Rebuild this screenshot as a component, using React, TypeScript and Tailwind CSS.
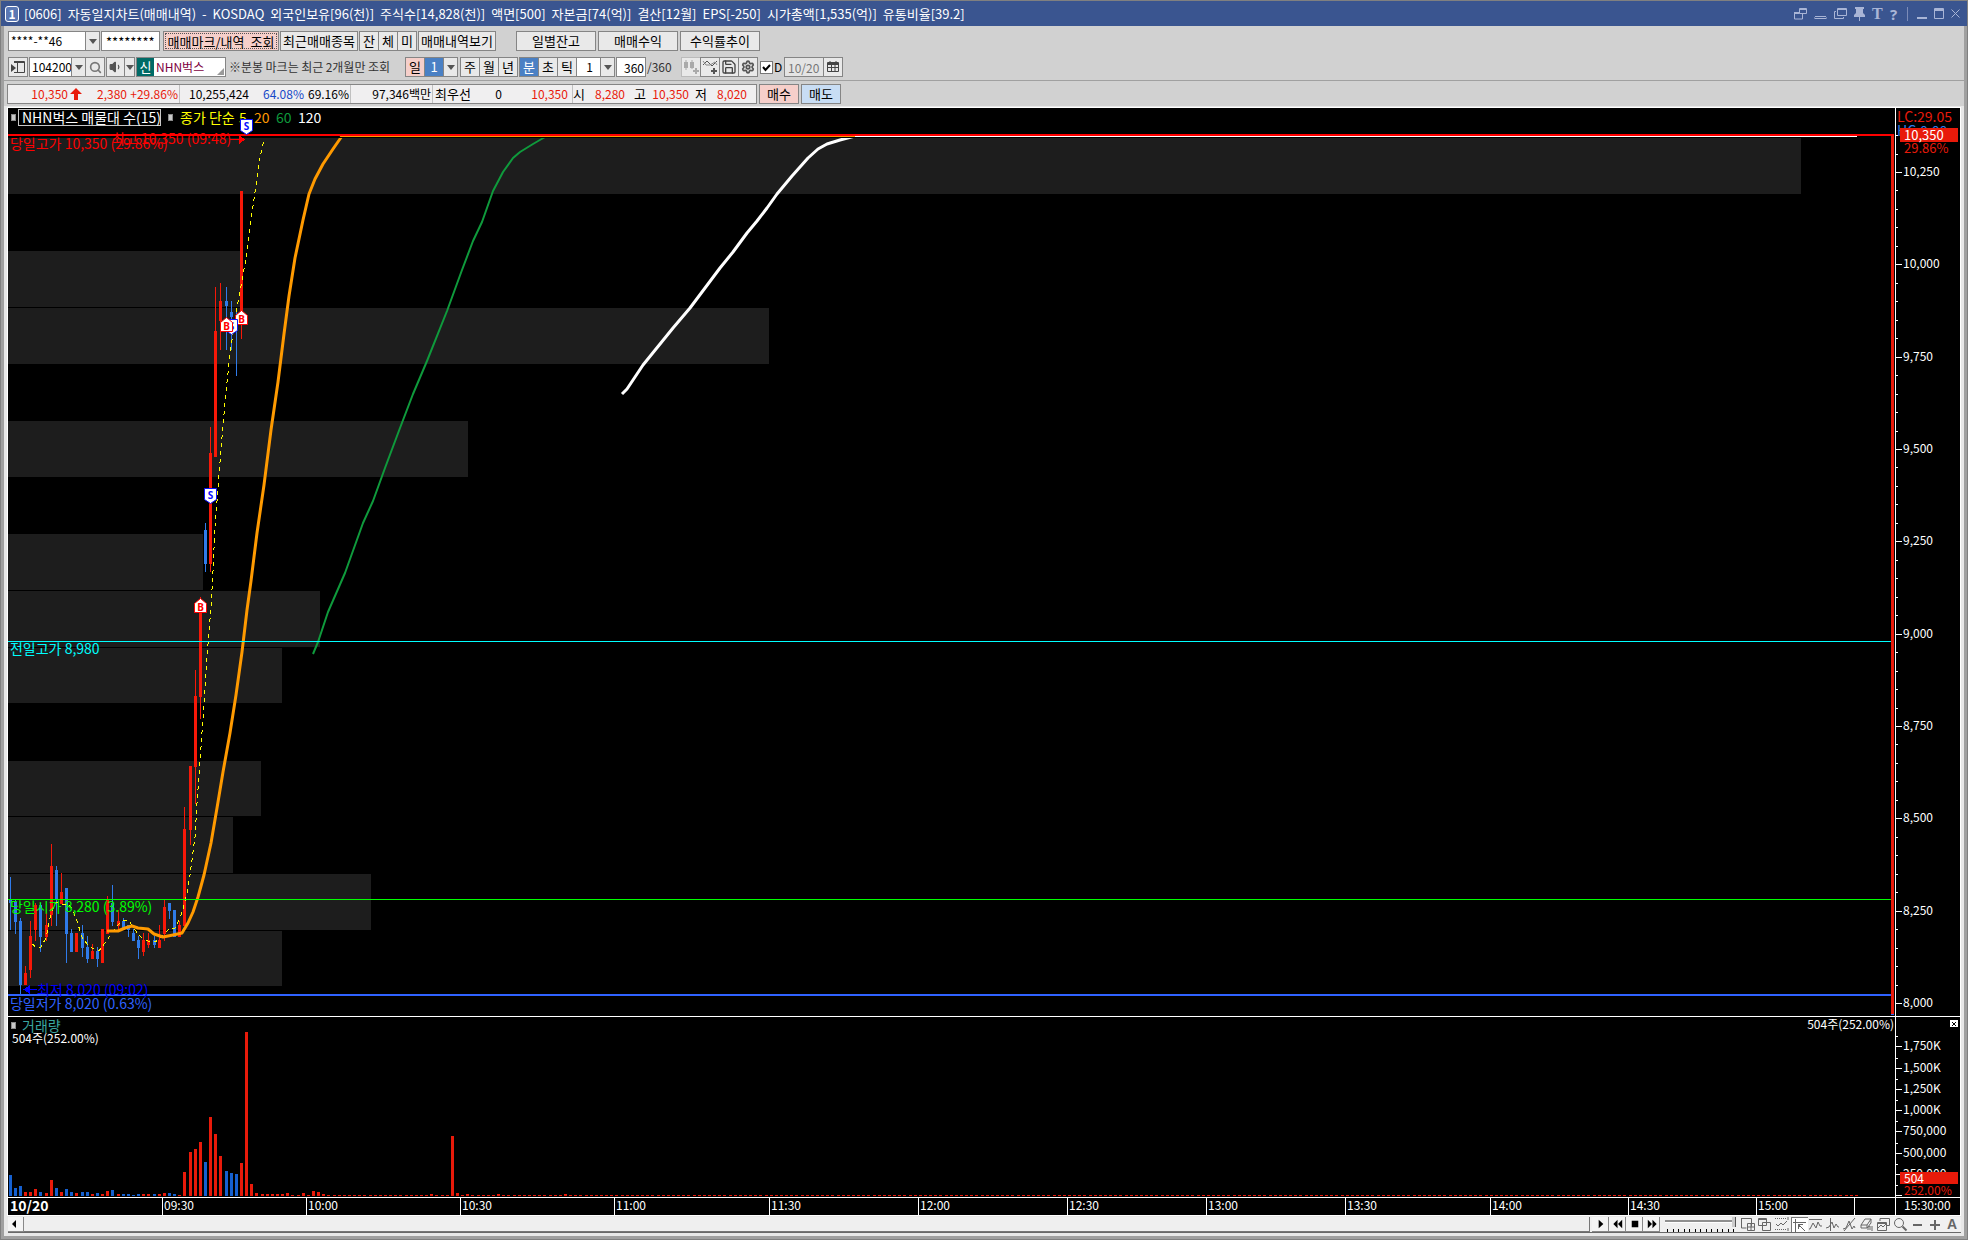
import React from "react";
import { Search, Volume1, Save, Settings, Calendar } from "lucide-react";

type Candle = [x: number, high: number, low: number, top: number, bottom: number, up: 0 | 1];

const RED = "#f71808";
const BLUE = "#2f7bea";

/* Price pane drawing space: 1887 x 908, origin at the pane's top left. */
const PW = 1887;
const PH = 908;
const VH = 180;

const candles: Candle[] = [
  [2, 769, 822, 791, 795, 0],
  [7, 791, 826, 794, 814, 0],
  [12, 810, 886, 813, 877, 0],
  [17, 858, 877, 865, 877, 1],
  [22, 813, 870, 828, 862, 1],
  [27, 795, 833, 797, 822, 1],
  [32, 795, 844, 797, 829, 0],
  [38, 801, 833, 817, 829, 1],
  [43, 736, 818, 758, 807, 1],
  [48, 758, 818, 762, 791, 0],
  [53, 765, 796, 784, 796, 1],
  [58, 780, 855, 780, 826, 0],
  [63, 821, 844, 825, 844, 0],
  [68, 825, 844, 825, 844, 1],
  [74, 817, 849, 825, 840, 0],
  [79, 828, 855, 839, 851, 0],
  [84, 836, 851, 843, 851, 1],
  [89, 839, 859, 843, 851, 0],
  [94, 821, 855, 821, 855, 1],
  [99, 788, 826, 792, 826, 1],
  [104, 777, 818, 795, 814, 0],
  [110, 802, 822, 813, 818, 1],
  [115, 810, 822, 813, 822, 0],
  [120, 817, 829, 817, 822, 0],
  [125, 821, 833, 825, 833, 0],
  [130, 828, 851, 832, 840, 0],
  [135, 825, 848, 832, 844, 1],
  [140, 825, 840, 832, 837, 1],
  [146, 828, 840, 832, 837, 0],
  [151, 817, 840, 832, 840, 1],
  [156, 791, 833, 799, 826, 1],
  [161, 795, 811, 795, 803, 0],
  [166, 802, 829, 802, 829, 0],
  [171, 813, 829, 817, 829, 1],
  [176, 699, 818, 721, 818, 1],
  [182, 658, 737, 658, 722, 1],
  [187, 562, 696, 588, 659, 1],
  [192, 489, 611, 499, 589, 1],
  [197, 415, 464, 422, 456, 0],
  [202, 319, 464, 345, 456, 1],
  [207, 179, 349, 223, 349, 1],
  [212, 175, 242, 193, 213, 1],
  [218, 179, 242, 193, 198, 0],
  [223, 193, 242, 204, 209, 0],
  [228, 201, 268, 212, 216, 0],
  [233, 83, 231, 83, 205, 1],
];

const bands: [y: number, h: number, w: number][] = [
  [30, 56, 1793],
  [143, 56, 232],
  [200, 56, 761],
  [313, 56, 460],
  [426, 56, 195],
  [483, 56, 312],
  [540, 55, 274],
  [653, 55, 253],
  [709, 56, 225],
  [766, 56, 363],
  [823, 55, 274],
];

const ma5 =
  "24,836 28,839 33,839 38,830 43,805 48,794 53,796 59,796 64,800 69,813 74,829 79,836 84,840 91,843 97,835 104,825 110,817 116,812 121,813 125,819 130,826 135,831 140,833 146,834 151,832 157,825 162,820 167,820 172,810 175,801 179,785 182,767 187,729 189,695 192,654 196,595 199,549 203,499 205,463 207,418 210,380 214,329 218,284 222,246 225,225 230,194 235,167 239,145 243,112 247,84 251,55 255,36 258,30";
const ma20 =
  "99,823 110,823 117,820 124,818 130,820 140,821 146,826 155,829 165,827 174,825 180,815 185,804 190,789 196,767 203,735 209,700 215,664 222,625 228,587 234,544 239,502 243,473 249,425 256,377 263,322 270,274 276,226 281,188 287,150 295,112 301,86 307,71 315,56 325,41 334,28 840,28";
const ma60 =
  "305,546 310,534 320,504 337,465 355,415 365,393 377,360 392,320 405,286 419,253 439,203 454,162 465,133 474,114 485,83 495,64 505,50 512,44 525,36 537,29 543,28";
const ma120 =
  "614,286 619,281 635,257 665,220 682,200 712,160 725,144 739,125 749,113 759,100 769,86 784,68 800,50 810,41 819,36 832,32 847,28 1849,28";

/* Volume bar heights for the first bars, negative for a falling bar. */
const volumes = [
  -21, -8, -10, 4, 4, 7, -4, 3, 16, -8, 4, -7, -4, 3, -4, -4, 2, -3, 2, 5, -6, 2, -2, -2, -1, -2, 2, 2, -2, 2, 3, -3,
  -2, 1, 24, 44, 47, 54, -34, 79, 62, 40, -25, -23, -22, 33, 164, 12, 3, 2, 2, 2, 2, 2, 3, 1, 1, 3, 1, 5, 4, 2,
];
const laterVolumes: Record<number, number> = { 82: 2, 86: 60, 87: 3, 89: 2, 95: 2, 108: 2 };
const bars = Array.from({ length: 360 }, (_, i) => ({
  x: 1 + Math.floor(0.1 + (i * 36) / 7),
  v: volumes[i] ?? laterVolumes[i] ?? 1,
}));

const priceY = (p: number) => 895 - ((p - 8000) * 831) / 2250;
const priceLabels = [10250, 10000, 9750, 9500, 9250, 9000, 8750, 8500, 8250, 8000];
const priceTicks = Array.from({ length: 48 }, (_, i) => 8000 + i * 50);

const volumeLabels: [string, number][] = [
  ["1,750K", 29],
  ["1,500K", 51],
  ["1,250K", 72],
  ["1,000K", 93],
  ["750,000", 114],
  ["500,000", 136],
  ["250,000", 157],
];
const volumeMinor = [19, 41, 62, 83, 104, 126, 147, 168];

const times: [string, number][] = [
  ["09:30", 154],
  ["10:00", 298],
  ["10:30", 452],
  ["11:00", 606],
  ["11:30", 761],
  ["12:00", 910],
  ["12:30", 1059],
  ["13:00", 1198],
  ["13:30", 1337],
  ["14:00", 1482],
  ["14:30", 1620],
  ["15:00", 1748],
  ["", 1846],
];

const pct = (v: number, total: number) => `${(v / total) * 100}%`;

const btn =
  "flex h-5 shrink-0 items-center justify-center border border-[#858585] bg-[#e9e9e9] text-black whitespace-nowrap";

function Btn({ className, children, label }: { className: string; children: React.ReactNode; label?: string }) {
  return (
    <button type="button" aria-label={label} className={`${btn} ${className}`}>
      {children}
    </button>
  );
}

function Caret() {
  return (
    <svg width="8" height="5" viewBox="0 0 8 5" className="shrink-0">
      <path d="M0 0h8L4 5z" fill="#555" />
    </svg>
  );
}

function Combo({ label, value, className, align }: { label: string; value: string; className: string; align: string }) {
  return (
    <label className={`relative flex h-5 shrink-0 border border-[#858585] bg-white ${className}`}>
      <select
        aria-label={label}
        className={`w-full appearance-none bg-transparent pr-[14px] pl-[2px] text-[12px] outline-none ${align}`}
      >
        <option>{value}</option>
      </select>
      <span className="pointer-events-none absolute inset-y-0 right-0 flex w-[14px] items-center justify-center border-l border-[#858585] bg-[#e9e9e9]">
        <Caret />
      </span>
    </label>
  );
}

function Marker({ kind, x, y }: { kind: "S" | "B"; x: number; y: number }) {
  const sell = kind === "S";
  return (
    <svg
      width="13"
      height="16"
      viewBox="0 0 13 16"
      className="absolute z-10"
      style={{ left: pct(x, PW), top: pct(y, PH) }}
    >
      <path
        d={sell ? "M.5.5h12v11L6.5 15.5L.5 11.5z" : "M.5 14.5h12V5.5L6.5.5L.5 5.5z"}
        fill="#fff"
        stroke={sell ? "#0a10ff" : "#f00"}
      />
      <text
        x="6.5"
        y={sell ? 11 : 13}
        textAnchor="middle"
        fontSize="10"
        fontWeight="700"
        fontFamily="Noto Sans, sans-serif"
        fill={sell ? "#0a10ff" : "#f00"}
      >
        {kind}
      </text>
    </svg>
  );
}

function PlotText({ x, y, className, children }: { x: number; y: number; className: string; children: React.ReactNode }) {
  return (
    <span
      className={`absolute text-[14px] leading-4 whitespace-pre ${className}`}
      style={{ left: pct(x, PW), top: pct(y, PH) }}
    >
      {children}
    </span>
  );
}

function TitleBar() {
  return (
    <header className="flex h-[25px] shrink-0 items-center bg-[#3a5590] pr-[7px] pl-1 text-white">
      <span className="flex h-4 w-[14px] items-center justify-center rounded-[3px] border border-white bg-[#5b78b4] text-[12px] leading-none font-bold">
        1
      </span>
      <h1 className="flex gap-[6px] pl-[5px] text-[13px] whitespace-nowrap">
        <span>[0606]</span>
        <span>자동일지차트(매매내역)</span>
        <span>-</span>
        <span>KOSDAQ</span>
        <span>외국인보유[96(천)]</span>
        <span>주식수[14,828(천)]</span>
        <span>액면[500]</span>
        <span>자본금[74(억)]</span>
        <span>결산[12월]</span>
        <span>EPS[-250]</span>
        <span>시가총액[1,535(억)]</span>
        <span>유통비율[39.2]</span>
      </h1>
      <div className="ml-auto flex items-center gap-[7px] text-[#a9b5d6]">
        <button type="button" aria-label="창 분리">
          <svg width="13" height="13" viewBox="0 0 13 13" fill="none" stroke="currentColor">
            <path d="M5.500 1.500h7v5h-7zM5 2.500h8M.5 5.500h5M.5 5v7h8V6.500M.5 6.500h5" />
          </svg>
        </button>
        <button type="button" aria-label="접기">
          <svg width="13" height="13" viewBox="0 0 13 13" fill="none" stroke="currentColor">
            <path d="M1 9.500h11M0 10v2M13 10v2M1 11.500h11" />
          </svg>
        </button>
        <button type="button" aria-label="창 복사">
          <svg width="13" height="13" viewBox="0 0 13 13" fill="none" stroke="currentColor">
            <path d="M3.500 1.500h9v7h-9zM3 2.500h10M2 4.500H.5v7h9V10" />
          </svg>
        </button>
        <button type="button" aria-label="고정">
          <svg width="11" height="14" viewBox="0 0 11 14" fill="currentColor">
            <path d="M1 0h9v2H9v4l2 2v2H6v4H5v-4H0V8l2-2V2H1z" />
          </svg>
        </button>
        <button type="button" className="w-[10px] font-['Liberation_Serif',serif] text-[16px] leading-4 font-bold">
          T
        </button>
        <button type="button" className="w-[9px] font-['Noto_Sans',sans-serif] text-[15px] leading-4 font-bold">
          ?
        </button>
        <span className="mx-[2px] h-[14px] w-px bg-[#7c8cb8]" />
        <button type="button" aria-label="최소화">
          <svg width="10" height="12" viewBox="0 0 10 12" fill="currentColor">
            <path d="M0 9h10v2H0z" />
          </svg>
        </button>
        <button type="button" aria-label="최대화">
          <svg width="10" height="11" viewBox="0 0 10 11" fill="none" stroke="currentColor">
            <path d="M.5.5h9v10h-9zM0 1.500h10M0 2.500h10" />
          </svg>
        </button>
        <button type="button" aria-label="닫기">
          <svg width="9" height="9" viewBox="0 0 9 9" fill="none" stroke="currentColor">
            <path d="M.5.5l8 8M8.500.5l-8 8" />
          </svg>
        </button>
      </div>
    </header>
  );
}

function AccountRow() {
  return (
    <div className="flex h-5 gap-px">
      <Combo label="계좌" value="****-**46" className="w-[92px]" align="" />
      <input
        aria-label="비밀번호"
        defaultValue="********"
        className="h-5 w-[59px] border border-[#858585] bg-white px-1 outline-none"
      />
      <span className="w-px" />
      <button type="button" className="h-5 w-[116px] border border-[#858585] bg-[#f6cfca] p-px">
        <span className="flex h-full items-center justify-center gap-[6px] border border-dotted border-[#555] leading-none whitespace-nowrap">
          <span>매매마크/내역</span>
          <span>조회</span>
        </span>
      </button>
      <Btn className="w-[78px]">최근매매종목</Btn>
      <div className="flex">
        <Btn className="w-5">잔</Btn>
        <Btn className="-ml-px w-5">체</Btn>
        <Btn className="-ml-px w-5">미</Btn>
      </div>
      <Btn className="w-[78px]">매매내역보기</Btn>
      <div className="flex gap-[2px] pl-[19px]">
        <Btn className="w-20">일별잔고</Btn>
        <Btn className="w-20">매매수익</Btn>
        <Btn className="w-20">수익률추이</Btn>
      </div>
    </div>
  );
}

function StockRow() {
  return (
    <div className="flex h-5 gap-px">
      <Btn className="w-5" label="목록">
        <svg width="14" height="14" viewBox="0 0 14 14" fill="none" stroke="#444">
          <path d="M3 1.500h10.500v11H3M6.500 1.500v11M3 2.500h10" />
          <path d="M0 4l5 4l-5 4z" fill="#444" stroke="none" />
        </svg>
      </Btn>
      <div className="flex">
        <Combo label="종목코드" value="104200" className="w-[57px]" align="" />
        <Btn className="-ml-px w-5" label="종목검색">
          <Search size={13} color="#777" strokeWidth={3} />
        </Btn>
      </div>
      <div className="flex">
        <Btn className="w-[19px]" label="음성">
          <Volume1 size={14} color="#555" fill="#555" />
        </Btn>
        <Btn className="-ml-px w-[11px]" label="음성 설정">
          <Caret />
        </Btn>
      </div>
      <div className="relative flex h-5 w-[90px] items-center bg-white outline outline-1 -outline-offset-1 outline-[#858585]">
        <span className="ml-px flex h-[18px] w-[17px] items-center justify-center bg-[#006a66] text-white">신</span>
        <span className="pl-[2px] text-[12px] text-[#7d0040]">NHN벅스</span>
        <svg width="7" height="7" viewBox="0 0 7 7" className="absolute right-[2px] bottom-[2px]">
          <path d="M7 0v7H0z" fill="#999" />
        </svg>
      </div>
      <p className="flex w-[177px] justify-between pr-[14px] pl-[2px] text-[12px] leading-5 whitespace-nowrap text-[#333]">
        <span>※분봉</span>
        <span>마크는</span>
        <span>최근</span>
        <span>2개월만</span>
        <span>조회</span>
      </p>
      <div className="flex">
        <Btn className="w-5 bg-[#f6cfca]!">일</Btn>
        <Btn className="-ml-px w-5 bg-[#4a80c4]! text-white!">1</Btn>
        <Btn className="-ml-px w-[15px]" label="일 주기">
          <Caret />
        </Btn>
      </div>
      <div className="flex pl-px">
        <Btn className="w-5">주</Btn>
        <Btn className="-ml-px w-5">월</Btn>
        <Btn className="-ml-px w-5">년</Btn>
      </div>
      <div className="flex">
        <Btn className="w-5 bg-[#4a80c4]! text-white!">분</Btn>
        <Btn className="-ml-px w-5">초</Btn>
        <Btn className="-ml-px w-5">틱</Btn>
        <Combo label="분 주기" value="1" className="-ml-px w-[39px]" align="text-center" />
      </div>
      <label className="flex items-center text-[12px]">
        <input
          aria-label="조회 개수"
          defaultValue="360"
          className="h-5 w-[30px] border border-[#858585] bg-white pr-px text-right outline-none"
        />
        <span className="w-[34px] pl-px text-[#333]">/360</span>
      </label>
      <div className="flex">
        <Btn className="w-5 border-[#bbb]!" label="캔들 추가">
          <svg width="16" height="16" viewBox="0 0 16 16" fill="#aaa">
            <path d="M1 3h4v6H1zM7 3h4v6H7zM2.500 1h1v10h-1zM8.500 1h1v9h-1zM12 9h2v2h2v2h-2v2h-2v-2h-2v-2h2z" />
          </svg>
        </Btn>
        <Btn className="-ml-px w-5" label="지표 추가">
          <svg width="16" height="16" viewBox="0 0 16 16" fill="none" stroke="#555">
            <path d="M1 6l4-4l5 5l5-5" />
            <path d="M1 2l3 4h4l5-3l2 3" stroke="#888" />
            <path d="M11 9h2v2h2v2h-2v2h-2v-2H9v-2h2z" fill="#555" stroke="none" />
          </svg>
        </Btn>
        <Btn className="-ml-px w-5" label="저장">
          <Save size={16} color="#444" strokeWidth={2} />
        </Btn>
        <Btn className="-ml-px w-5" label="설정">
          <Settings size={14} color="#555" strokeWidth={3} />
        </Btn>
      </div>
      <label className="flex w-6 items-center gap-px pl-px text-[12px]">
        <span className="relative flex size-[13px] shrink-0">
          <input
            type="checkbox"
            defaultChecked
            className="peer size-[13px] appearance-none border border-[#777] bg-white"
          />
          <svg width="13" height="13" viewBox="0 0 13 13" className="pointer-events-none absolute inset-0 hidden peer-checked:block">
            <path d="M3 6l2.500 3L10 4" fill="none" stroke="#000" strokeWidth="2" />
          </svg>
        </span>
        D
      </label>
      <div className="flex">
        <input
          aria-label="날짜"
          defaultValue="10/20"
          className="h-5 w-10 border border-[#858585] bg-[#e4e4e4] pl-[3px] text-[12px] text-[#777] outline-none"
        />
        <Btn className="-ml-px w-5" label="달력">
          <svg width="12" height="12" viewBox="0 0 12 12" fill="none" stroke="#444">
            <path d="M.5 1.500h11v9H.5zM0 2.500h12M0 3.500h12M.5 6.500h11M4.500 4v6M8 4v6" />
            <path d="M3 0v2M9 0v2" />
          </svg>
        </Btn>
      </div>
    </div>
  );
}

function QuoteRow() {
  return (
    <div className="-ml-px flex h-5 gap-[2px]">
      <div className="flex w-[750px] border border-[#858585] bg-[#f0eff0] text-right text-[12px] leading-[18px] whitespace-nowrap text-[#e81a0a]">
        <div className="flex w-[172px] border-r border-[#c0c0c0]">
          <span className="w-[60px]">10,350</span>
          <svg width="12" height="12" viewBox="0 0 12 12" className="mt-[3px] ml-[2px]">
            <path d="M6 0l6 6H8v6H4V6H0z" fill="#e81a0a" />
          </svg>
          <span className="w-[45px]">2,380</span>
          <span className="w-[51px]">+29.86%</span>
        </div>
        <div className="flex w-[171px] border-r border-[#c0c0c0] text-black">
          <span className="w-[69px]">10,255,424</span>
          <span className="w-[55px] text-[#1648c8]">64.08%</span>
          <span className="w-[45px]">69.16%</span>
        </div>
        <div className="w-[82px] border-r border-[#c0c0c0] pr-px text-black">97,346백만</div>
        <div className="flex w-[140px] border-r border-[#c0c0c0]">
          <span className="pl-[2px] text-[13px] text-black">최우선</span>
          <span className="w-[31px] text-black">0</span>
          <span className="w-[66px]">10,350</span>
        </div>
        <div className="flex">
          <span className="text-[13px] text-black">시</span>
          <span className="w-10">8,280</span>
          <span className="w-[21px] text-[13px] text-black">고</span>
          <span className="w-[43px]">10,350</span>
          <span className="w-[18px] text-[13px] text-black">저</span>
          <span className="w-10">8,020</span>
        </div>
      </div>
      <Btn className="w-10 bg-[#f6cfca]!">매수</Btn>
      <Btn className="w-10 bg-[#c8ddf4]!">매도</Btn>
    </div>
  );
}

function Square() {
  return <span className="h-[7px] w-[5px] border border-[#8a8a8a] bg-[#c8c8c8]" />;
}

function PricePane() {
  return (
    <div className="flex min-h-0 flex-[908] border-b border-white">
      <div className="relative min-w-0 flex-1 overflow-hidden">
        <svg
          viewBox={`0 0 ${PW} ${PH}`}
          preserveAspectRatio="none"
          className="absolute inset-0 h-full w-full"
          shapeRendering="crispEdges"
        >
          {bands.map(([y, h, w]) => (
            <rect key={y} x="0" y={y} width={w} height={h} fill="#1d1d1d" />
          ))}
          {candles.map(([x, hi, lo, top, bottom, up]) => (
            <g key={x} fill={up ? RED : BLUE}>
              <rect x={x} y={hi} width="1" height={lo - hi} />
              <rect x={x - 1} y={top} width="3" height={bottom - top} />
            </g>
          ))}
          <g fill="none" strokeLinejoin="round">
            <polyline points={ma5} stroke="#ffff00" strokeDasharray="4 4" />
            <polyline points={ma20} stroke="#ff9a00" strokeWidth="3" shapeRendering="auto" />
            <polyline points={ma60} stroke="#0f9a3c" strokeWidth="2" shapeRendering="auto" />
            <polyline points={ma120} stroke="#ffffff" strokeWidth="3" shapeRendering="auto" />
          </g>
          <rect x="0" y="533" width="1883" height="1" fill="#00ffff" />
          <rect x="0" y="791" width="1883" height="1" fill="#00ff00" />
          <rect x="0" y="886" width="1883" height="2" fill="#2f62ff" />
          <rect x="0" y="29" width="1883" height="1" fill="#000" />
          <rect x="334" y="28" width="514" height="1" fill="#ff9a00" />
          <rect x="847" y="28" width="1002" height="1" fill="#fff" />
          <rect x="0" y="26" width="1886" height="2" fill="#ff0000" />
          <rect x="1883" y="27" width="3" height="880" fill="#e81a0a" />
          <rect x="1883" y="906" width="3" height="1" fill="#2f62ff" />
          <path d="M222 31h9v-4l6 4.500l-6 4.500v-4h-9z" fill="#ff0000" />
          <path d="M29 882h-7v4l-7-4.500l7-4.500v4h7z" fill="#0000ff" />
        </svg>
        <div className="absolute top-0 left-[3px] flex h-[18px] items-center text-[14px] leading-[15px] whitespace-nowrap">
          <Square />
          <span className="ml-[2px] w-[143px] border border-[#c8c8c8] pl-[3px] text-white">NHN벅스 매물대 수(15)</span>
          <span className="ml-[7px] flex">
            <Square />
          </span>
          <span className="w-[66px] pl-[7px] text-[#ffff00]">종가 단순</span>
          <span className="w-[15px] text-[#ffff00]">5</span>
          <span className="w-[22px] text-[#ff9a00]">20</span>
          <span className="w-[22px] text-[#0f9a3c]">60</span>
          <span className="text-white">120</span>
        </div>
        <PlotText x={104} y={22} className="text-[#ff0000]">최고 10,350 (09:48)</PlotText>
        <PlotText x={2} y={27} className="text-[#ff0000]">당일고가 10,350 (29.86%)</PlotText>
        <PlotText x={2} y={532} className="text-[#00ffff]">전일고가 8,980</PlotText>
        <PlotText x={2} y={790} className="text-[#00ff00]">당일시가 8,280 (3.89%)</PlotText>
        <PlotText x={29} y={873} className="text-[#0000ff]">최저 8,020 (09:02)</PlotText>
        <PlotText x={2} y={887} className="text-[#2f62ff]">당일저가 8,020 (0.63%)</PlotText>
        <Marker kind="S" x={232} y={11} />
        <Marker kind="B" x={227} y={202} />
        <Marker kind="S" x={217} y={211} />
        <Marker kind="B" x={212} y={209} />
        <Marker kind="S" x={196} y={380} />
        <Marker kind="B" x={186} y={490} />
      </div>
      <div className="relative w-[65px] shrink-0 overflow-hidden border-l border-white text-[12px]">
        {priceTicks.map((p) => (
          <span
            key={p}
            className={p % 250 === 0 ? "absolute left-0 h-px w-[6px] bg-white" : "absolute left-0 h-px w-[2px] bg-white"}
            style={{ top: pct(Math.round(priceY(p)), PH) }}
          />
        ))}
        {priceLabels.map((p) => (
          <span
            key={p}
            className="absolute left-[7px] -translate-y-1/2 leading-4 text-white"
            style={{ top: pct(Math.round(priceY(p)) - 1, PH) }}
          >
            {p.toLocaleString("en-US")}
          </span>
        ))}
        <div className="absolute inset-x-0 top-0 text-[13px] text-[#e81a0a]">
          <p className="pl-px text-[14px] leading-4">LC:29.05</p>
          <p className="h-1 pl-px text-[14px] leading-[13px] text-[#2f7bea]">HC:0.00</p>
          <p className="relative mr-[2px] ml-1 h-[14px] bg-[#e81a0a] pl-1 leading-[14px] text-white">10,350</p>
          <p className="pl-2 leading-[11px]">29.86%</p>
        </div>
      </div>
    </div>
  );
}

function VolumePane() {
  return (
    <div className="flex min-h-0 flex-[180] border-b border-white">
      <div className="relative min-w-0 flex-1 overflow-hidden">
        <svg
          viewBox={`0 0 ${PW} ${VH}`}
          preserveAspectRatio="none"
          className="absolute inset-0 h-full w-full"
          shapeRendering="crispEdges"
        >
          {bars.map(({ x, v }) => (
            <rect key={x} x={x} y={179 - Math.abs(v)} width="3" height={Math.abs(v)} fill={v > 0 ? "#e81a0a" : "#1560d0"} />
          ))}
        </svg>
        <div className="relative flex items-center gap-[6px] pt-px pl-[3px] text-[14px] leading-[15px] text-[#3aa6a0]">
          <Square />
          거래량
        </div>
        <p className="relative pl-1 text-[12px] leading-[10px] text-white">504주(252.00%)</p>
        <p className="absolute top-0 right-px text-[12px] leading-[13px] text-white">504주(252.00%)</p>
      </div>
      <div className="relative w-[65px] shrink-0 overflow-hidden border-l border-white text-[12px] text-white">
        <button
          type="button"
          aria-label="거래량 닫기"
          className="absolute top-[3px] right-[2px] flex h-[7px] w-2 items-center justify-center bg-white"
        >
          <svg width="4" height="4" viewBox="0 0 4 4">
            <path d="M0 0l4 4M4 0L0 4" stroke="#000" />
          </svg>
        </button>
        {volumeMinor.map((y) => (
          <span key={y} className="absolute left-0 h-px w-[2px] bg-white" style={{ top: pct(y, VH) }} />
        ))}
        {volumeLabels.map(([t, y]) => (
          <React.Fragment key={t}>
            <span className="absolute left-0 h-px w-[6px] bg-white" style={{ top: pct(y, VH) }} />
            <span className="absolute left-[7px] -translate-y-1/2 leading-4" style={{ top: pct(y - 1, VH) }}>
              {t}
            </span>
          </React.Fragment>
        ))}
        <div className="absolute right-[2px] bottom-px left-1 leading-3">
          <p className="bg-[#e81a0a] pl-1">504</p>
          <p className="pl-1 text-[#e81a0a]">252.00%</p>
        </div>
        <span className="absolute bottom-px left-0 h-px w-[6px] bg-white" />
      </div>
    </div>
  );
}

function TimeAxis() {
  return (
    <div className="flex h-[18px] shrink-0 border-b border-white text-[12px] leading-[14px] text-white">
      <div className="relative min-w-0 flex-1">
        <b className="absolute top-0 left-[2px] text-[14px]">10/20</b>
        {times.map(([t, x]) => (
          <span key={x} className="absolute top-0 h-full border-l border-white pl-px" style={{ left: pct(x, PW) }}>
            {t}
          </span>
        ))}
      </div>
      <div className="w-[65px] shrink-0 border-l border-white pl-2">15:30:00</div>
    </div>
  );
}

const toolPaths: [string, string][] = [
  ["창 추가", "M1.500 1.500h10v8M1.500 1v10h5M7.500 6.500h7v7h-7zM11 7v7M8 10h7"],
  ["창 겹치기", "M1.500 1.500h8v7h-8zM1 2.500h9M5.500 5.500h8v8h-8z"],
  ["구간", "M1 1.500h1m1 0h1m1 0h1m1 0h1m1 0h1m1 0h1M1 12.500h1m1 0h1m1 0h1m1 0h1m1 0h1m1 0h1M2 7l2 2l3-3l2 2l4-4M14 0v3M14 11v3"],
  ["선택", "M3.500 1v13M1 4.500h13M6 6.500h5M6.500 7v4M7 7l6 6M6.500 8.500h2"],
  ["추세선", "M1 2.500h13M1 12h1l3-6l3 5l2-6l2 4h2"],
  ["수직선", "M5.500 1v13M1 11l3-1l3-5l2 6l2-4l2 3h1"],
  ["사선", "M2 14L13 1M1 12l3-1l3-7l3 8l2-3l1 2"],
  ["전체 삭제", "M2 8l4-6h6l-4 6zM2 8v3h6V8M8 11l4-5V2M9 13v-3l2-1v4M13 9v5"],
  ["차트 겹치기", "M4 4V1.500h9.500v7H11M1.500 5.500h9v8h-9zM2 11l3-3l2 2l3-3M1 6.500h9"],
];

function BottomBar() {
  const play = [
    ["재생", "M5 3v9l5-4.500z"],
    ["뒤로", "M7 3v9L2.500 7.500zM12 3v9L7.500 7.500z"],
    ["정지", "M4 4h7v7H4z"],
    ["앞으로", "M3 3v9l4.500-4.500zM8 3v9l4.500-4.500z"],
  ];
  return (
    <div className="flex h-4 shrink-0 items-stretch overflow-hidden border-b border-[#696969] bg-[#f0f0f0] pr-px text-[#666]">
      <button type="button" aria-label="왼쪽으로" className="w-4 border-r border-b border-[#888] bg-[#f4f4f4]">
        <svg width="14" height="14" viewBox="0 0 14 14">
          <path d="M8 3v8L4 7z" fill="#000" />
        </svg>
      </button>
      <div className="mr-[2px] min-w-0 flex-1 border-r border-b border-[#777] bg-[#efefef]" />
      {play.map(([label, d]) => (
        <button
          key={label}
          type="button"
          aria-label={label}
          className="w-[17px] border-r border-b border-[#888] bg-[#f4f4f4] pl-[2px]"
        >
          <svg width="14" height="14" viewBox="0 0 15 15">
            <path d={d} fill="#000" />
          </svg>
        </button>
      ))}
      <div className="relative mr-1 ml-[5px] w-[71px]">
        <input
          type="range"
          aria-label="속도"
          defaultValue={100}
          className="absolute top-0 left-0 h-2 w-full appearance-none bg-transparent [&::-webkit-slider-runnable-track]:h-[3px] [&::-webkit-slider-runnable-track]:border-b [&::-webkit-slider-runnable-track]:border-white [&::-webkit-slider-runnable-track]:bg-[#909090] [&::-webkit-slider-thumb]:-mt-1 [&::-webkit-slider-thumb]:h-[11px] [&::-webkit-slider-thumb]:w-1 [&::-webkit-slider-thumb]:appearance-none [&::-webkit-slider-thumb]:border-r [&::-webkit-slider-thumb]:border-[#555] [&::-webkit-slider-thumb]:bg-[#ccc]"
        />
        <div className="absolute inset-x-[2px] bottom-0 flex justify-between">
          {Array.from({ length: 13 }, (_, i) => (
            <span key={i} className="h-[3px] w-px bg-black" />
          ))}
        </div>
      </div>
      {toolPaths.map(([label, d], i) => (
        <button
          key={label}
          type="button"
          aria-label={label}
          className={i === 3 ? "w-[17px] border-t border-l border-[#777] bg-white" : "w-[17px]"}
        >
          <svg width="15" height="15" viewBox="0 0 15 15" fill="none" stroke="currentColor">
            <path d={d} />
          </svg>
        </button>
      ))}
      <button type="button" aria-label="돋보기" className="w-[17px]">
        <svg width="15" height="15" viewBox="0 0 15 15" fill="none" stroke="currentColor">
          <circle cx="6" cy="6" r="4.500" />
          <path d="M9.500 9.500l4 4" strokeWidth="2" />
        </svg>
      </button>
      <button type="button" aria-label="축소" className="w-[17px]">
        <svg width="15" height="15" viewBox="0 0 15 15" fill="currentColor">
          <path d="M3 7h9v2H3z" />
        </svg>
      </button>
      <button type="button" aria-label="확대" className="w-[17px]">
        <svg width="15" height="15" viewBox="0 0 15 15" fill="currentColor">
          <path d="M7 3h2v4h4v2H9v4H7V9H3V7h4z" />
        </svg>
      </button>
      <button type="button" className="w-4 font-['Liberation_Sans',sans-serif] text-[14px] leading-[15px] font-bold">
        A
      </button>
    </div>
  );
}

export default function App() {
  return (
    <div className="flex h-screen min-h-[480px] flex-col overflow-hidden border border-[#808080] bg-[#a0a0a0] font-['Noto_Sans_CJK_KR',sans-serif] text-[13px]">
      <TitleBar />
      <main className="mr-[3px] mb-[3px] ml-[3px] flex min-h-0 flex-1 flex-col bg-[#e8e8e8]">
        <section className="flex flex-col gap-[6px] border-b border-[#a0a0a0] bg-[#d1d1d1] pt-[5px] pb-[3px] pl-1">
          <AccountRow />
          <StockRow />
        </section>
        <section className="bg-[#d1d1d1] pt-[3px] pb-[2px] pl-1">
          <QuoteRow />
        </section>
        <section className="mx-[3px] mt-px flex min-h-0 flex-1 flex-col border border-b-0 border-white bg-black">
          <PricePane />
          <VolumePane />
          <TimeAxis />
        </section>
        <footer className="mx-[3px] mb-[3px] pt-px pl-px">
          <BottomBar />
        </footer>
      </main>
    </div>
  );
}
